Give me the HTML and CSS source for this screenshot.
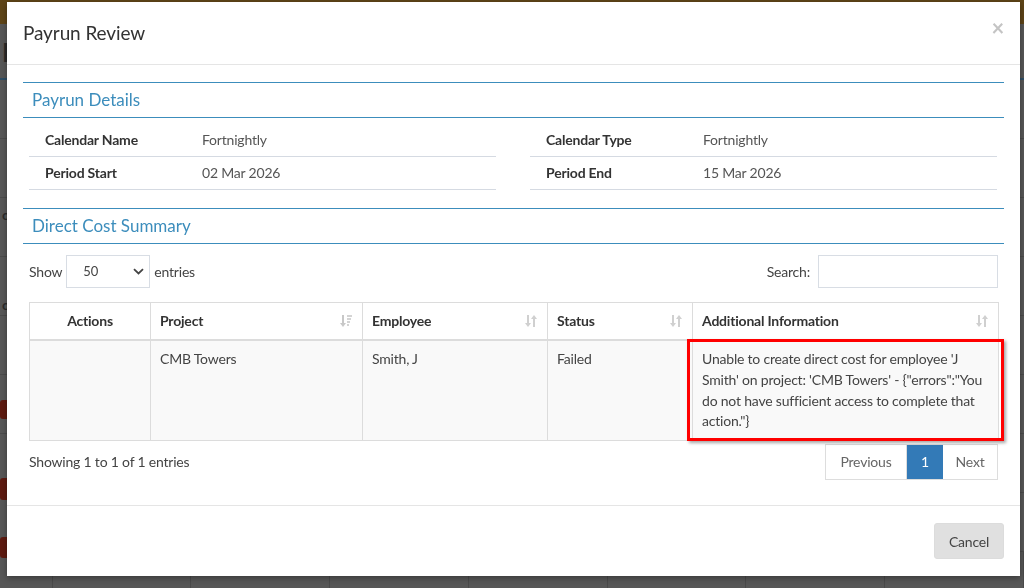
FILE: index.html
```html
<!DOCTYPE html>
<html lang="en">
<head>
<meta charset="utf-8">
<title>Payrun Review</title>
<link rel="stylesheet" href="styles.css">
</head>
<body>
<div class="page">
  <div class="page-top"></div>
  <div class="page-body">
    <div class="bg-row bg-row-head"><span class="bg-glyph">H</span></div>
    <div class="bg-row"></div>
    <div class="bg-row"></div>
    <div class="bg-row"><span class="bg-glyph small o1">o</span></div>
    <div class="bg-row"><span class="bg-glyph small o2">o</span></div>
    <div class="bg-row"></div>
    <div class="bg-row"><span class="bg-btn b1"></span></div>
    <div class="bg-row"><span class="bg-btn b2"></span></div>
    <div class="bg-row"><span class="bg-btn b3"></span></div>
    <div class="bg-row bg-cols"><span class="first"></span><span></span><span></span><span></span><span></span><span></span><span></span><span></span></div>
  </div>
</div>

<div class="modal">
  <div class="modal-header">
    <h4 class="modal-title">Payrun Review</h4>
    <span class="close">&times;</span>
  </div>

  <div class="modal-body">
    <div class="section-head">Payrun Details</div>
    <div class="details">
      <div class="dtable">
        <div class="drow"><span class="dlabel">Calendar Name</span><span class="dval">Fortnightly</span></div>
        <div class="drow"><span class="dlabel">Period Start</span><span class="dval">02 Mar 2026</span></div>
      </div>
      <div class="dtable">
        <div class="drow"><span class="dlabel">Calendar Type</span><span class="dval">Fortnightly</span></div>
        <div class="drow"><span class="dlabel">Period End</span><span class="dval">15 Mar 2026</span></div>
      </div>
    </div>

    <div class="section-head">Direct Cost Summary</div>
    <div class="dt-wrap">
      <div class="dt-top">
        <div class="length">Show
          <span class="select">50
            <svg class="chev" width="11" height="7" viewBox="0 0 11 7"><path d="M1 1.2l4.5 4.3 4.5-4.3" fill="none" stroke="#444" stroke-width="1.8"/></svg>
          </span>
          entries</div>
        <div class="search">Search: <span class="input"></span></div>
      </div>

      <table class="grid">
        <colgroup>
          <col class="c1"><col class="c2"><col class="c3"><col class="c4"><col class="c5">
        </colgroup>
        <thead>
          <tr>
            <th class="center">Actions</th>
            <th><span class="th-in">Project
              <svg class="sort" width="12" height="14" viewBox="0 0 12 14"><path d="M3 1v10" stroke="#c8c8c8" stroke-width="2"/><path d="M0 9h6l-3 4z" fill="#c8c8c8"/><path d="M7 2h5M7 5h4M7 8h3M7 11h2" stroke="#d4d4d4" stroke-width="2"/></svg></span></th>
            <th><span class="th-in">Employee
              <svg class="sort" width="12" height="14" viewBox="0 0 12 14"><path d="M3 1v10" stroke="#d0d0d0" stroke-width="2"/><path d="M0 9h6l-3 4z" fill="#d0d0d0"/><path d="M9 13V3" stroke="#d0d0d0" stroke-width="2"/><path d="M6 5h6l-3-4z" fill="#d0d0d0"/></svg></span></th>
            <th><span class="th-in">Status
              <svg class="sort" width="12" height="14" viewBox="0 0 12 14"><path d="M3 1v10" stroke="#d0d0d0" stroke-width="2"/><path d="M0 9h6l-3 4z" fill="#d0d0d0"/><path d="M9 13V3" stroke="#d0d0d0" stroke-width="2"/><path d="M6 5h6l-3-4z" fill="#d0d0d0"/></svg></span></th>
            <th><span class="th-in">Additional Information
              <svg class="sort" width="12" height="14" viewBox="0 0 12 14"><path d="M3 1v10" stroke="#d0d0d0" stroke-width="2"/><path d="M0 9h6l-3 4z" fill="#d0d0d0"/><path d="M9 13V3" stroke="#d0d0d0" stroke-width="2"/><path d="M6 5h6l-3-4z" fill="#d0d0d0"/></svg></span></th>
          </tr>
        </thead>
        <tbody>
          <tr>
            <td></td>
            <td>CMB Towers</td>
            <td>Smith, J</td>
            <td>Failed</td>
            <td class="info-cell">Unable to create direct cost for employee 'J Smith' on project: 'CMB Towers' - {"errors":"You do not have sufficient access to complete that action."}<span class="highlight"></span></td>
          </tr>
        </tbody>
      </table>

      <div class="dt-bottom">
        <div class="info">Showing 1 to 1 of 1 entries</div>
        <div class="pager">
          <span class="pg prev">Previous</span><span class="pg active">1</span><span class="pg next">Next</span>
        </div>
      </div>
    </div>
  </div>

  <div class="modal-footer">
    <button class="btn">Cancel</button>
  </div>
</div>
</body>
</html>
```

FILE: styles.css
```css
* { box-sizing: border-box; }

html, body {
  margin: 0;
  height: 100%;
}

body {
  font-family: Lato, "Noto Sans", sans-serif;
  font-size: 14px;
  letter-spacing: -0.2px;
  color: #444;
  background: #575757;
  overflow: hidden;
}

/* ---------- dimmed page behind the modal ---------- */
.page {
  height: 588px;
  display: flex;
  flex-direction: column;
}
.page-top {
  height: 24px;
  background: #5e4417;
}
.page-body {
  flex: 1;
  display: flex;
  flex-direction: column;
}
.bg-row {
  height: 59px;
  flex: none;
  border-bottom: 1px solid #4b4b4b;
}
.bg-row-head {
  height: 56px;
  border-bottom: 2px solid #2f4e66;
}
.bg-glyph {
  display: block;
  color: #2a2a2a;
  font-size: 26px;
  font-weight: bold;
  padding: 12px 0 0 2px;
}
.bg-glyph.small {
  font-size: 14px;
  color: #2b2b2b;
}
.o1 { padding-top: 8px; }
.o2 { padding-top: 39px; }
.bg-btn {
  display: block;
  width: 22px;
  height: 19px;
  border-radius: 3px;
  background: #5e1a10;
}
.b1 { margin-top: 25px; }
.b2 { margin-top: 44px; height: 22px; }
.b3 { margin-top: 44px; height: 21px; }
.bg-cols {
  flex: 1;
  display: flex;
  border: none;
}
.bg-cols span {
  width: 145px;
  border-right: 1px solid #4a4a4a;
}
.bg-cols span.first { width: 55px; }

/* ---------- modal (overlay) ---------- */
.modal {
  position: fixed;
  left: 7px;
  top: 2px;
  width: 1013px;
  height: 574px;
  background: #fff;
  box-shadow: 0 2px 6px rgba(0, 0, 0, 0.35);
  display: flex;
  flex-direction: column;
}

.modal-header {
  height: 63px;
  padding: 0 16px;
  border-bottom: 1px solid #e5e5e5;
  display: flex;
  align-items: center;
  justify-content: space-between;
}
.modal-title {
  margin: 0;
  font-size: 19px;
  font-weight: normal;
  color: #333;
  letter-spacing: -0.1px;
}
.close {
  font-size: 22px;
  font-weight: bold;
  color: #c4c4c4;
  line-height: 1;
  margin: -9px 0 0 0;
}

.modal-body {
  padding: 17px 16px 0;
  height: 441px;
}

.section-head {
  height: 36px;
  border-top: 1px solid #3c8dbc;
  border-bottom: 1px solid #3c8dbc;
  color: #3c8dbc;
  font-size: 17px;
  letter-spacing: 0;
  padding-left: 9px;
  display: flex;
  align-items: center;
}

.details {
  display: grid;
  grid-template-columns: 467px 467px;
  column-gap: 34px;
  padding: 6px 6px 0;
  margin-bottom: 18px;
}
.drow {
  height: 33px;
  border-bottom: 1px solid #d5dae2;
  display: flex;
  align-items: center;
}
.dlabel {
  width: 173px;
  padding-left: 16px;
  font-weight: bold;
  color: #333;
}
.dval {
  color: #555;
}

.dt-wrap {
  padding: 0 6px;
}
.dt-top {
  display: flex;
  justify-content: space-between;
  align-items: center;
  margin-top: 11px;
  margin-bottom: 14px;
}
.length, .search {
  display: flex;
  align-items: center;
  gap: 4px;
  color: #444;
}
.search { gap: 8px; }
.select {
  width: 84px;
  height: 33px;
  border: 1px solid #d8dde4;
  padding: 0 4px 0 16px;
  display: flex;
  align-items: center;
  justify-content: space-between;
  font-size: 13px;
  color: #444;
}
.chev { margin-right: 1px; }
.input {
  width: 180px;
  height: 33px;
  border: 1px solid #d8dde4;
}

.grid {
  width: 969px;
  border-collapse: collapse;
  table-layout: fixed;
  border: 1px solid #dcdcdc;
}
.c1 { width: 121px; }
.c2 { width: 212px; }
.c3 { width: 185px; }
.c4 { width: 145px; }
.c5 { width: 306px; }

.grid th, .grid td {
  border: 1px solid #dcdcdc;
  padding: 8px 9px;
  line-height: 20.6px;
  text-align: left;
  vertical-align: top;
}
.grid th {
  font-weight: bold;
  color: #333;
  border-bottom-width: 2px;
}
.grid th.center { text-align: center; }
.th-in {
  display: flex;
  justify-content: space-between;
  align-items: center;
}
.sort { margin-right: 1px; }
.grid tbody tr { background: #f9f9f9; }
.grid td { color: #444; height: 100px; }
.grid td.info-cell { padding-right: 4px; }

.info-cell { position: relative; }
.highlight {
  position: absolute;
  left: -6px;
  right: -6px;
  top: -2px;
  bottom: -1px;
  border: 3px solid #f00;
  box-shadow: 2px 2px 3px rgba(0, 0, 0, 0.35);
}

.dt-bottom {
  margin-top: 3px;
  display: flex;
  justify-content: space-between;
  align-items: center;
}
.pager {
  display: flex;
  height: 36px;
  border: 1px solid #ddd;
}
.pg {
  display: flex;
  align-items: center;
  justify-content: center;
  color: #666;
}
.pg.prev { width: 81px; border-right: 1px solid #ddd; }
.pg.next { width: 54px; }
.pg.active {
  background: #337ab7;
  color: #fff;
  width: 36px;
}

.modal-footer {
  flex: 1;
  border-top: 1px solid #e5e5e5;
  display: flex;
  justify-content: flex-end;
  align-items: flex-start;
  padding: 17px 16px;
}
.btn {
  font-family: inherit;
  font-size: 14px;
  letter-spacing: -0.2px;
  color: #444;
  background: #e0e0e0;
  border: 1px solid #dcdcdc;
  border-radius: 3px;
  width: 70px;
  height: 36px;
  padding: 0;
}
```
